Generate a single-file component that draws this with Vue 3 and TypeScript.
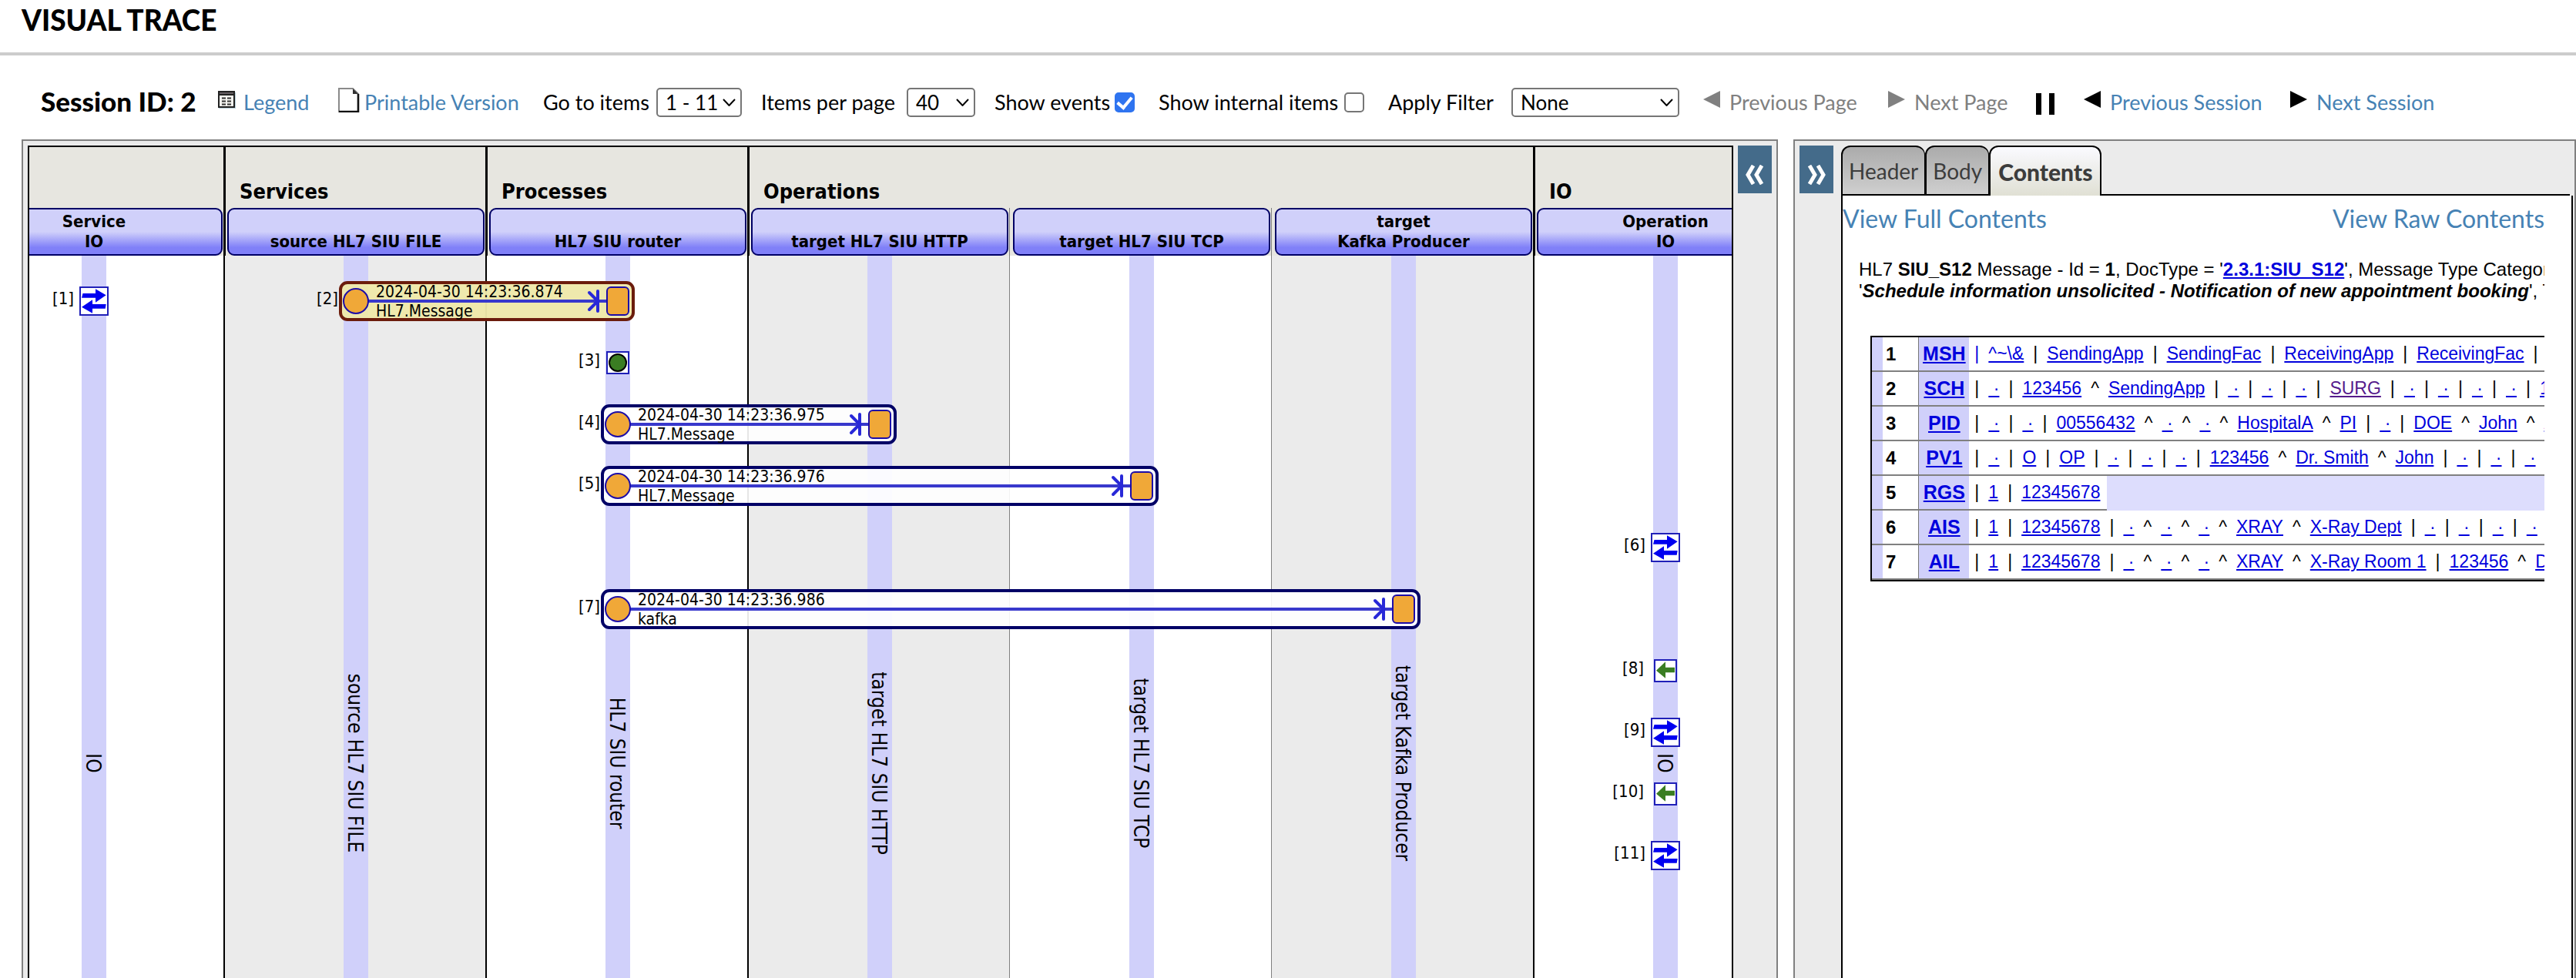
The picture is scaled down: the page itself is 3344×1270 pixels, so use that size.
<script setup lang="ts">
import { ref } from 'vue'

type Seg = { sep: string; text: string; visited?: boolean }
type Row = { code: string; items: Seg[]; short?: boolean; firstLinked?: boolean }

const lanePitch = 340
const laneCenter = (lane: number) => lane * lanePitch + 172
// Items 1 and 2 share the first row; every later item takes a row of its own.
const rowCenter = (item: number) => 59 + Math.max(0, item - 2) * 80
const textCenter = 659

const lanes = [
  { lines: ['Service', 'IO'], label: 'IO', edge: 'none' },
  { lines: ['source HL7 SIU FILE'], label: 'source HL7 SIU FILE', edge: 'strong' },
  { lines: ['HL7 SIU router'], label: 'HL7 SIU router', edge: 'strong' },
  { lines: ['target HL7 SIU HTTP'], label: 'target HL7 SIU HTTP', edge: 'strong' },
  { lines: ['target HL7 SIU TCP'], label: 'target HL7 SIU TCP', edge: 'thin' },
  { lines: ['target', 'Kafka Producer'], label: 'target Kafka Producer', edge: 'thin' },
  { lines: ['Operation', 'IO'], label: 'IO', edge: 'strong' },
]

const groups = [
  { title: '', span: 1 },
  { title: 'Services', span: 1 },
  { title: 'Processes', span: 1 },
  { title: 'Operations', span: 3 },
  { title: 'IO', span: 1 },
]

const messages = [
  { id: 2, from: 1, to: 2, time: '2024-04-30 14:23:36.874', name: 'HL7.Message', selected: true },
  { id: 4, from: 2, to: 3, time: '2024-04-30 14:23:36.975', name: 'HL7.Message', selected: false },
  { id: 5, from: 2, to: 4, time: '2024-04-30 14:23:36.976', name: 'HL7.Message', selected: false },
  { id: 7, from: 2, to: 5, time: '2024-04-30 14:23:36.986', name: 'kafka', selected: false },
]

const events = [
  { id: 1, lane: 0, kind: 'io' },
  { id: 3, lane: 2, kind: 'trace' },
  { id: 6, lane: 6, kind: 'io' },
  { id: 8, lane: 6, kind: 'reply' },
  { id: 9, lane: 6, kind: 'io' },
  { id: 10, lane: 6, kind: 'reply' },
  { id: 11, lane: 6, kind: 'io' },
]
const labelEnd: Record<string, number> = { io: -26, reply: -28, trace: -23 }

// "|a^b" becomes separator/value pairs; an empty value is drawn as a small dot.
function parse(source: string): Seg[] {
  return [...source.matchAll(/([|^])([^|^]*)/g)].map((m) => ({
    sep: m[1],
    text: m[2] === '' ? '\u00a0·' : m[2].replace('{enc}', '^~\\&'),
    visited: m[2] === 'SURG',
  }))
}

const rows: Row[] = [
  { code: 'MSH', items: parse('|{enc}|SendingApp|SendingFac|ReceivingApp|ReceivingFac|2024'), firstLinked: true },
  { code: 'SCH', items: parse('||123456^SendingApp||||SURG|||||10') },
  { code: 'PID', items: parse('|||00556432^^^HospitalA^PI||DOE^John^A') },
  { code: 'PV1', items: parse('||O|OP||||123456^Dr. Smith^John|||') },
  { code: 'RGS', items: parse('|1|12345678'), short: true },
  { code: 'AIS', items: parse('|1|12345678|^^^XRAY^X-Ray Dept||||') },
  { code: 'AIL', items: parse('|1|12345678|^^^XRAY^X-Ray Room 1|123456^Dr') },
]

const page = ref('1 - 11')
const perPage = ref('40')
const filter = ref('None')
const showEvents = ref(true)
const showInternal = ref(false)
const tabs = ['Header', 'Body', 'Contents']
const activeTab = ref('Contents')
</script>

<template>
  <div class="app">
    <header class="title"><h1>VISUAL TRACE</h1></header>

    <div class="toolbar">
      <strong class="session">Session ID: 2</strong>
      <a class="tool" href="#legend">
        <svg width="24" height="24" viewBox="0 0 24 24">
          <rect x="1" y="2" width="22" height="21" fill="#b9d0da" />
          <rect x="1" y="1" width="20" height="20" fill="#f2f2ee" stroke="#222" stroke-width="2" />
          <rect x="1" y="1" width="20" height="4" fill="#665f63" stroke="#222" stroke-width="2" />
          <path d="M5 9.5h14M5 13.5h14M5 17.5h14" stroke="#333" stroke-width="2" stroke-dasharray="5 2" />
        </svg>
        <span>Legend</span>
      </a>
      <a class="tool doc" href="#print">
        <svg width="28" height="32" viewBox="0 0 28 32">
          <path d="M1 1h18l7 7v23H1z" fill="#fff" stroke="#8a8a8a" stroke-width="2" />
          <path d="M26 8v23H1" fill="none" stroke="#111" stroke-width="2.6" />
          <path d="M19 1v7h7z" fill="#333" />
        </svg>
        <span>Printable Version</span>
      </a>
      <label class="field near">
        <span>Go to items</span>
        <span class="pick page-pick">
          <select v-model="page"><option>1 - 11</option></select>
          <svg width="17" height="10" viewBox="0 0 17 10"><path d="M1 1l7.5 8L16 1" /></svg>
        </span>
      </label>
      <label class="field near">
        <span>Items per page</span>
        <span class="pick count-pick">
          <select v-model="perPage"><option>40</option><option>80</option></select>
          <svg width="17" height="10" viewBox="0 0 17 10"><path d="M1 1l7.5 8L16 1" /></svg>
        </span>
      </label>
      <label class="field"><span>Show events</span><input v-model="showEvents" type="checkbox" /></label>
      <label class="field"><span>Show internal items</span><input v-model="showInternal" type="checkbox" /></label>
      <label class="field">
        <span>Apply Filter</span>
        <span class="pick filter-pick">
          <select v-model="filter"><option>None</option></select>
          <svg width="17" height="10" viewBox="0 0 17 10"><path d="M1 1l7.5 8L16 1" /></svg>
        </span>
      </label>
      <button class="nav off" type="button">
        <svg width="22" height="22" viewBox="0 0 22 22"><path d="M22 0v22L0 11z" /></svg>
        <span>Previous Page</span>
      </button>
      <button class="nav off" type="button">
        <svg width="22" height="22" viewBox="0 0 22 22"><path d="M0 0v22l22-11z" /></svg>
        <span>Next Page</span>
      </button>
      <svg class="pause" width="26" height="28" viewBox="0 0 26 28"><path d="M1 0h7v28H1zM18 0h7v28h-7z" /></svg>
      <a class="nav" href="#prev">
        <svg width="22" height="22" viewBox="0 0 22 22"><path d="M22 0v22L0 11z" /></svg>
        <span>Previous Session</span>
      </a>
      <a class="nav" href="#next">
        <svg width="22" height="22" viewBox="0 0 22 22"><path d="M0 0v22l22-11z" /></svg>
        <span>Next Session</span>
      </a>
    </div>

    <main class="panels">
      <section class="panel trace">
        <div class="canvas">
          <div class="track">
            <div class="groups">
              <div v-for="(g, i) in groups" :key="i" class="group" :class="{ wide: g.span === 3 }">{{ g.title }}</div>
            </div>
            <div class="heads">
              <div v-for="(l, i) in lanes" :key="i" class="head" :class="l.edge">
                <div class="box"><span v-for="t in l.lines" :key="t">{{ t }}</span></div>
              </div>
            </div>
            <div class="lanes">
              <div v-for="(l, i) in lanes" :key="i" class="lane" :class="[l.edge, { shaded: i % 2 === 1 }]">
                <div class="bar"></div>
              </div>
              <svg class="diagram" width="2380" height="938" viewBox="0 0 2380 938">
                <text
                  v-for="(l, i) in lanes" :key="'t' + i" class="vertical"
                  :transform="`translate(${laneCenter(i) - 10} ${textCenter}) rotate(90)`"
                >{{ l.label }}</text>

                <g v-for="m in messages" :key="m.id" :transform="`translate(${laneCenter(m.from)} ${rowCenter(m.id)})`">
                  <text class="num" x="-23" y="4">[{{ m.id }}]</text>
                  <rect
                    class="msg" :class="{ selected: m.selected }" x="-20" y="-24" rx="9"
                    :width="(m.to - m.from) * lanePitch + 40" height="48"
                  />
                  <text class="cap" x="26" y="-5">{{ m.time }}</text>
                  <text class="cap" x="26" y="20">{{ m.name }}</text>
                  <g :transform="`translate(${(m.to - m.from) * lanePitch} 0)`">
                    <path class="wire" :d="`M${16 - (m.to - m.from) * lanePitch} 0H-15`" />
                    <path class="wire tip" d="M-26 -13V13M-37 -11L-26 0L-37 11" />
                    <rect class="end" x="-14" y="-18" width="28" height="36" rx="5" />
                  </g>
                  <circle class="end" r="16" />
                </g>

                <g v-for="e in events" :key="e.id" :transform="`translate(${laneCenter(e.lane)} ${rowCenter(e.id)})`">
                  <text class="num" :x="labelEnd[e.kind]" y="4">[{{ e.id }}]</text>
                  <g v-if="e.kind === 'io'" transform="translate(-19 -19)">
                    <rect class="tile" x="1" y="1" width="36" height="36" />
                    <path
                      fill="#0000f0"
                      d="M4.5 9H21V3.3L34.7 11.3L21 20.7V14.7H3zM3 26.7L17 17.3V23H34.7L33.7 28.7H17V34.7z"
                    />
                  </g>
                  <g v-else-if="e.kind === 'reply'" transform="translate(-15 -15)">
                    <rect class="tile" x="1" y="1" width="28" height="28" />
                    <path fill="#3a7d22" d="M3 14.7L15 3.3V10.7H27V17.3H15V24.7z" />
                  </g>
                  <g v-else>
                    <rect class="tile" x="-14" y="-14" width="28" height="28" />
                    <circle r="11" fill="#3a7d22" stroke="#000" stroke-width="2" />
                  </g>
                </g>
              </svg>
            </div>
          </div>
        </div>
        <button class="fold" type="button" aria-label="Collapse trace">
          <svg width="26" height="26" viewBox="0 0 26 26"><path d="M11 1L4 13l7 12M22 1l-7 12 7 12" /></svg>
        </button>
      </section>

      <section class="panel detail">
        <button class="fold" type="button" aria-label="Collapse details">
          <svg width="26" height="26" viewBox="0 0 26 26"><path d="M4 1l7 12-7 12M15 1l7 12-7 12" /></svg>
        </button>
        <div class="pane">
          <div class="tabs">
            <button
              v-for="t in tabs" :key="t" type="button" class="tab"
              :class="{ active: t === activeTab }" @click="activeTab = t"
            >{{ t }}</button>
            <div class="tab-rest"></div>
          </div>
          <div class="body">
            <div class="clip">
              <div class="views">
                <a href="#full">View Full Contents</a>
                <a href="#raw">View Raw Contents</a>
              </div>
              <p class="summary">
                HL7 <b>SIU_S12</b> Message - Id = <b>1</b>, DocType = '<a href="#doc"><b>2.3.1:SIU_S12</b></a>', Message Type Category =<br />
                '<b><i>Schedule information unsolicited - Notification of new appointment booking</i></b>', Time
              </p>
              <table class="segments">
                <tbody>
                  <tr v-for="(r, i) in rows" :key="r.code">
                    <td class="n">{{ i + 1 }}</td>
                    <td class="code"><a href="#segment">{{ r.code }}</a></td>
                    <td class="data">
                      <div class="line" :class="{ short: r.short }">
                        <template v-for="(s, j) in r.items" :key="j">
                          <span class="sep" :class="{ linked: r.firstLinked && j === 0 }">{{ s.sep }}</span>
                          <a href="#field" :class="{ visited: s.visited }">{{ s.text }}</a>
                        </template>
                      </div>
                    </td>
                  </tr>
                </tbody>
              </table>
            </div>
          </div>
        </div>
      </section>
    </main>
  </div>
</template>

<style>
body { margin: 0; background: #fff; }
</style>

<style scoped>
* { box-sizing: border-box; }
.app {
  display: flex;
  flex-direction: column;
  height: 100vh;
  overflow: hidden;
  color: #000;
  font-family: Lato, sans-serif;
  font-size: 27px;
}
.title { flex: none; height: 72px; padding-left: 28px; border-bottom: 4px solid #ccc; }
h1 { margin: 0; font-size: 37px; font-weight: 900; line-height: 52px; }

.toolbar {
  flex: none;
  display: grid;
  grid-template-columns: 230px 156px 266px 283px 303px 213px 298px 409px 240px 191px 63px 268px auto;
  justify-content: start;
  align-items: center;
  height: 109px;
  padding: 40px 0 31px 53px;
  line-height: 38px;
  white-space: nowrap;
}
.session { padding-bottom: 4px; font-size: 35px; font-weight: 900; }
a { color: steelblue; text-decoration: none; }
.tool { display: flex; align-items: center; gap: 9px; }
.tool svg { margin-bottom: 6px; }
.doc { gap: 6px; }
.field { display: flex; align-items: center; justify-content: space-between; padding-right: 31px; }
.near { padding-right: 25px; }
.pick { position: relative; height: 38px; }
.pick select {
  display: block;
  width: 100%;
  height: 38px;
  padding: 0 10px;
  appearance: none;
  border: 2px solid #767676;
  border-radius: 5px;
  background: #fff;
  color: #000;
  font: 26px/34px Lato, sans-serif;
}
.pick svg { position: absolute; top: 14px; right: 8px; pointer-events: none; fill: none; stroke: #000; stroke-width: 2; }
.page-pick { width: 111px; }
.count-pick { width: 89px; }
.filter-pick { width: 218px; }
input[type='checkbox'] {
  appearance: none;
  display: grid;
  place-items: center;
  width: 26px;
  height: 26px;
  margin: 0;
  border: 2px solid #767676;
  border-radius: 5px;
  background: #fff;
}
input[type='checkbox']:checked { border-color: #2f74f0; background: #2f74f0; }
input[type='checkbox']:checked::before {
  content: '';
  width: 8px;
  height: 15px;
  margin-bottom: 4px;
  border: solid #fff;
  border-width: 0 4px 4px 0;
  transform: rotate(40deg);
}
.nav {
  display: flex;
  align-items: center;
  gap: 12px;
  padding: 0;
  border: 0;
  background: none;
  font: inherit;
  line-height: 38px;
}
.nav svg { margin-bottom: 8px; fill: #000; }
.off { color: #808080; }
.off svg { fill: #808080; }
.pause { margin-top: 4px; }

.panels {
  flex: 1;
  display: grid;
  grid-template-columns: 2280fr 1016fr;
  gap: 20px;
  min-height: 0;
  margin-left: 28px;
}
.panel {
  display: flex;
  min-width: 0;
  min-height: 0;
  padding: 6px 6px 0;
  border: 2px solid #808080;
  border-bottom: 0;
  background: #ebebeb;
}
.trace { gap: 6px; }
.detail { gap: 10px; padding-right: 2px; }
.fold {
  flex: none;
  display: grid;
  place-items: center;
  width: 44px;
  height: 62px;
  padding: 14px 0 0;
  border: 0;
  background: #446b8a;
}
.fold svg { fill: none; stroke: #fff; stroke-width: 5; }

.canvas {
  flex: 1;
  min-width: 0;
  overflow: hidden;
  border: 2px solid #000;
  border-bottom: 0;
  background: #fff;
  font-family: 'DejaVu Sans Condensed', 'DejaVu Sans', sans-serif;
}
/* The track is scrolled so that the first lane is partly hidden. */
.track { display: flex; flex-direction: column; width: 2380px; height: 100%; margin-left: -88px; }
.groups { flex: none; display: flex; height: 79px; background: #e7e6e0; }
.group {
  flex: none;
  width: 340px;
  padding: 38px 0 0 18px;
  border-left: 3px solid #000;
  font-size: 27px;
  font-weight: 700;
  line-height: 40px;
}
.wide { width: 1020px; }
.heads { flex: none; display: flex; height: 62px; background: #e7e6e0; }
.head { flex: none; display: flex; width: 340px; padding: 0 1px 0 2px; border-left: 3px solid #000; }
.head.thin { padding-left: 4px; border-left: 1px solid #808080; }
.box {
  flex: 1;
  display: flex;
  flex-direction: column;
  justify-content: flex-end;
  align-items: center;
  padding-bottom: 3px;
  border: 2px solid #000066;
  border-radius: 9px;
  background: linear-gradient(#d0d0fa 50%, #8080f8 85%);
  font-size: 22px;
  font-weight: 700;
  line-height: 26px;
}
.lanes { flex: 1; position: relative; display: flex; overflow: hidden; }
.lane { flex: none; width: 340px; padding-left: 156px; border-left: 0 solid #000; background: #fff; }
.lane.strong { padding-left: 154px; border-left-width: 2px; }
.lane.thin { padding-left: 155px; border-left: 1px solid #808080; }
.lane.shaded { background: #ebebeb; }
.bar { width: 32px; height: 100%; background: #d0d0fa; }
.diagram { position: absolute; top: 0; left: 0; }
.vertical { font-size: 26px; text-anchor: middle; }
.num { font-size: 22px; text-anchor: end; }
.cap { font-size: 21px; }
.msg { fill: #fff; fill-opacity: 0.9; stroke: #000066; stroke-width: 4; }
.msg.selected { fill: #eee8aa; fill-opacity: 0.96; stroke: #6b1c0c; }
.wire { fill: none; stroke: #3838cc; stroke-width: 4; }
.tip { stroke-linecap: round; stroke: #2828d8; }
.end { fill: #f0a838; stroke: #1c0ca8; stroke-width: 2; }
.tile { fill: #fff; stroke: #2020b8; stroke-width: 2; }

.pane { flex: 1; display: flex; flex-direction: column; min-width: 0; }
.tabs { flex: none; display: flex; height: 65px; }
.tab {
  height: 65px;
  padding: 0 8px;
  border: 2px solid #000;
  border-right-width: 1px;
  border-radius: 12px 12px 0 0;
  background: linear-gradient(#ababab, #cfcfcf);
  color: #3c3c3c;
  font: 28px/60px Lato, sans-serif;
}
.tab.active {
  padding: 0 10px;
  border-right-width: 2px;
  border-bottom: 0;
  background: linear-gradient(#fafaff, #e0e0d4);
  font-size: 30px;
  font-weight: 900;
}
.tab-rest { flex: 1; margin-right: 4px; border-bottom: 2px solid #000; }
.body { flex: 1; min-height: 0; padding-right: 35px; border: solid #000; border-width: 0 2px; background: #fff; }
.clip { overflow: hidden; font-family: 'Liberation Sans', Arial, sans-serif; }
.views { display: flex; justify-content: space-between; font: 32px/60px Lato, sans-serif; }
.summary { margin: 22px 0 44px 21px; font-size: 24px; line-height: 28px; white-space: nowrap; }
.summary a, .segments a { color: #0000dd; text-decoration: underline; }
.segments {
  min-width: 100%;
  margin-left: 36px;
  border: solid #000;
  border-width: 2px 0 2px 2px;
  border-spacing: 0;
  font-size: 23px;
  line-height: 43px;
  white-space: nowrap;
}
td { padding: 0; }
.n {
  min-width: 61px;
  padding: 0 29px 0 18px;
  border-right: 1px solid #777;
  border-bottom: 2px solid #808080;
  background: linear-gradient(90deg, #d0d0fa 14px, #fff 14px);
  font-size: 24px;
  font-weight: 700;
}
.code {
  min-width: 65px;
  border-bottom: 2px solid #808080;
  background: #d0d0fa;
  font-size: 25px;
  font-weight: 700;
  text-align: center;
}
.data { width: 100%; background: #ddddfd; }
.line { display: flex; padding: 0 9px 0 7px; border-bottom: 2px solid #808080; background: #fff; }
.short { width: fit-content; }
.sep { padding: 0 12px; }
.sep:first-child { padding-left: 0; }
.linked { color: #0000dd; }
.segments .visited { color: #551a8b; }
</style>
